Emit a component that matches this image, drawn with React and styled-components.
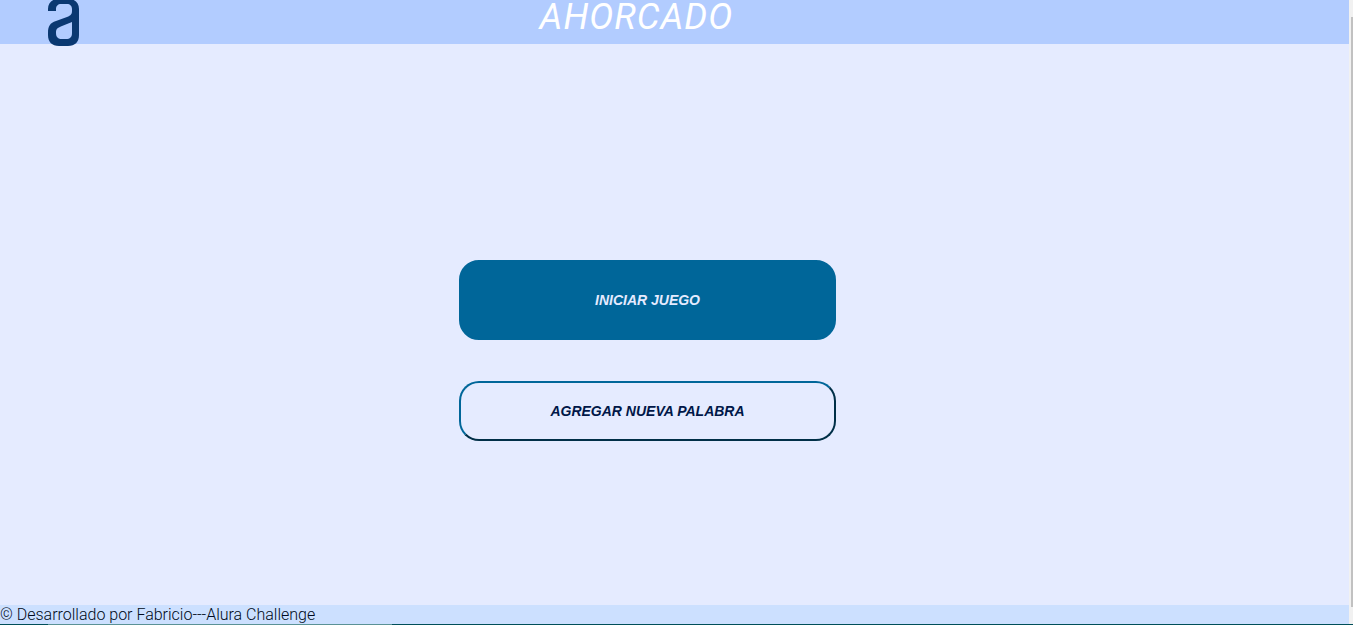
import React from "react";
import styled, { createGlobalStyle } from "styled-components";

const GlobalStyle = createGlobalStyle`
  *, *::before, *::after { box-sizing: border-box; }
  body { margin: 0; background: #e5ebff; overflow: hidden; }
`;

const Window = styled.div`
  display: flex;
  flex-direction: column;
  height: 100vh;
  font-family: Roboto, "Liberation Sans", sans-serif;
`;

const Viewport = styled.div`
  display: flex;
  flex: 1;
  min-height: 0;
`;

const Page = styled.div`
  display: flex;
  flex-direction: column;
  flex: 1;
  background: #e5ebff;
`;

const Header = styled.header`
  display: grid;
  grid-template-columns: 40% 1fr;
  align-items: start;
  height: 44px;
  background: #b2ccff;
`;

const LogoLink = styled.a`
  display: block;
  padding-left: 47px;
`;

const Logo = styled.svg`
  display: block;
  width: 34px;
  height: 47px;
`;

const Title = styled.h1`
  margin: 0;
  color: #ffffff;
  font-size: 36px;
  font-style: italic;
  font-weight: 400;
  letter-spacing: 1px;
  line-height: 34px;
`;

const Main = styled.main`
  display: flex;
  flex-direction: column;
  flex: 1;
  justify-content: center;
  gap: 41px;
  width: 28%;
  margin-left: 34%;
  padding-top: 52px;
`;

const Button = styled.button`
  height: ${({ $primary }) => ($primary ? "80px" : "60px")};
  padding: 0;
  border: 2px solid;
  border-color: ${({ $primary }) =>
    $primary ? "#006699" : "#006699 #002f47 #002f47 #006699"};
  border-radius: 20px;
  background: ${({ $primary }) => ($primary ? "#006699" : "transparent")};
  color: ${({ $primary }) => ($primary ? "#e5ebff" : "#001748")};
  font-family: "Liberation Sans", Arial, sans-serif;
  font-size: 14px;
  font-style: italic;
  font-weight: 700;
  text-transform: uppercase;
  cursor: pointer;
`;

const Footer = styled.footer`
  height: 19px;
  background: #cce0ff;
  color: #000a20;
  font-size: 16px;
  font-weight: 300;
  line-height: 19px;
`;

const ScrollTrack = styled.div`
  display: flex;
  justify-content: flex-end;
  width: 4px;
  padding: 17px 0;
  background: #f1f1f1;
`;

const ScrollThumb = styled.div`
  width: 2px;
  background: #c1c1c1;
`;

const BottomEdge = styled.div`
  height: 1px;
  padding-left: 48px;
  background: #004f59;
`;

const EdgeHighlight = styled.div`
  width: 344px;
  height: 1px;
  background: #5a9296;
`;

export default function App() {
  return (
    <Window>
      <GlobalStyle />
      <Viewport>
        <Page>
          <Header>
            <LogoLink href="#" aria-label="Alura">
              <Logo viewBox="0 0 34 47" aria-hidden="true">
                <path
                  fill="#0a3871"
                  fillRule="evenodd"
                  d="M1 11V9C1 3 5 -1 11 -1H22C28 -1 32 3 32 9V35C32 42 28 46 21 46H12C5 46 1 42 1 35V33C1 26 3 23 9 21L20 17C24 15.500 25 14 25 11V9C25 6 23 4 20 4H14C11 4 9 6 9 9V11ZM25 22L15 26C10 28 9 29 9 33C9 37 11 39 15 39H19C23 39 25 37 25 33Z"
                />
              </Logo>
            </LogoLink>
            <Title>AHORCADO</Title>
          </Header>
          <Main>
            <Button type="button" $primary>Iniciar juego</Button>
            <Button type="button">Agregar nueva palabra</Button>
          </Main>
          <Footer>© Desarrollado por Fabricio---Alura Challenge</Footer>
        </Page>
        <ScrollTrack>
          <ScrollThumb />
        </ScrollTrack>
      </Viewport>
      <BottomEdge>
        <EdgeHighlight />
      </BottomEdge>
    </Window>
  );
}
